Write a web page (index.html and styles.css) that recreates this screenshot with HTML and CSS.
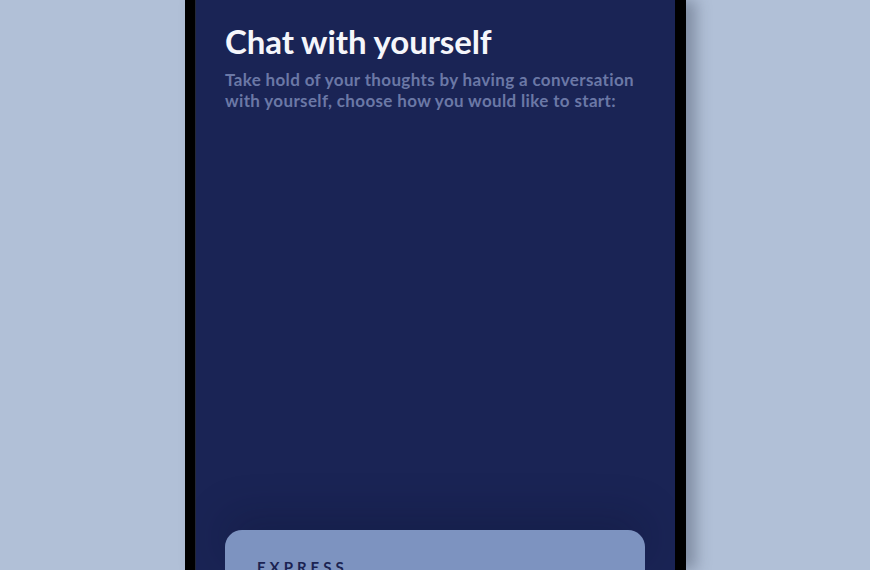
FILE: index.html
```html
<!DOCTYPE html>
<html lang="en">
<head>
<meta charset="utf-8">
<title>Chat with yourself</title>
<link rel="stylesheet" href="styles.css">
</head>
<body>
<div class="stage">
  <div class="phone">
    <div class="screen">
      <header class="intro">
        <h1 class="title">Chat with yourself</h1>
        <p class="subtitle">Take hold of your thoughts by having a conversation with yourself, choose how you would like to start:</p>
      </header>
      <div class="spacer"></div>
      <div class="card">
        <span class="card-label">EXPRESS</span>
      </div>
    </div>
  </div>
</div>
</body>
</html>
```
FILE: styles.css
```css
html, body {
  margin: 0;
  padding: 0;
  height: 570px;
  overflow: hidden;
  background: #b1c0d7;
}

.stage {
  height: 570px;
  display: flex;
  justify-content: flex-start;
  padding-left: 185px;
}

.phone {
  width: 480px;
  height: 570px;
  border-left: 10px solid #000;
  border-right: 11px solid #000;
  box-shadow: 10px 0 14px rgba(40, 50, 70, 0.35);
  display: flex;
}

.screen {
  flex: 1;
  background: #1a2455;
  box-shadow: inset 1px 0 0 #232838;
  display: flex;
  flex-direction: column;
  padding: 20px 30px 0 30px;
  font-family: "Lato", "Open Sans", sans-serif;
}

.title {
  margin: 0;
  font-size: 33px;
  font-weight: 700;
  line-height: 42px;
  color: #f5f6fb;
  letter-spacing: -0.1px;
}

.subtitle {
  margin: 7px 0 0 0;
  font-size: 17px;
  font-weight: 700;
  line-height: 21px;
  letter-spacing: 0.35px;
  color: #6b78a6;
  max-width: 420px;
}

.spacer {
  flex: 1;
}

.card {
  box-sizing: border-box;
  height: 40px;
  overflow: hidden;
  background: #7d93c0;
  border-radius: 17px 17px 0 0;
  padding: 27px 32px 0 32px;
  box-shadow: 0 -14px 40px rgba(10, 15, 40, 0.25);
}

.card-label {
  font-size: 15px;
  font-weight: 700;
  letter-spacing: 4px;
  color: #1b2352;
  line-height: 20px;
}
```
